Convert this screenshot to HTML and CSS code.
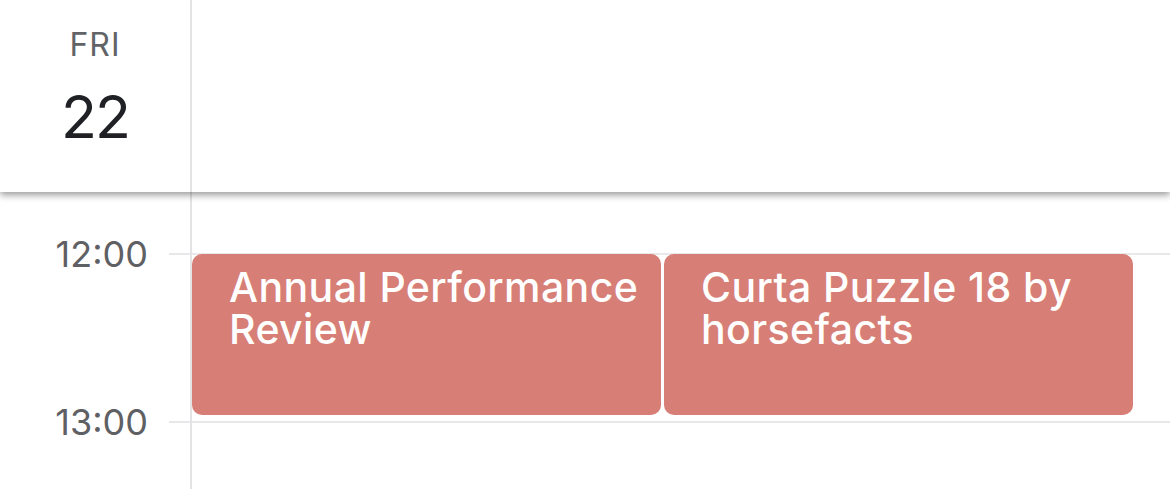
FILE: index.html
```html
<!DOCTYPE html>
<html lang="en">
<head>
    <meta charset="UTF-8">
    <meta name="viewport" content="width=device-width, initial-scale=1.0">
    <title>Day view</title>
    <link rel="stylesheet" href="styles.css">
</head>
<body>
    <div class="day-header">
        <div class="day-label">
            <div class="day-name">FRI</div>
            <div class="day-number">22</div>
        </div>
        <div class="day-allday"></div>
    </div>

    <div class="day-grid">
        <div class="gutter">
            <div class="time"><span>12:00</span></div>
            <div class="time"><span>13:00</span></div>
        </div>
        <div class="day-column">
            <div class="slot">
                <div class="events">
                    <div class="event">Annual Performance Review</div>
                    <div class="event">Curta Puzzle 18 by horsefacts</div>
                </div>
            </div>
            <div class="slot"></div>
        </div>
    </div>
</body>
</html>
```

FILE: styles.css
```css
body {
    margin: 0;
    font-family: Inter, "Noto Sans", sans-serif;
    background: #fff;
    height: 489px;
    overflow: hidden;
}
.day-header {
    display: flex;
    height: 192px;
    position: relative;
    z-index: 1;
    background: #fff;
    box-shadow: 0 3px 7px rgba(0, 0, 0, 0.4);
}
.day-label {
    width: 190px;
    border-right: 2px solid #e3e3e5;
    display: flex;
    flex-direction: column;
    align-items: center;
    padding-top: 25px;
}
.day-name {
    font-size: 32px;
    letter-spacing: 1px;
    color: #616367;
    line-height: 40px;
}
.day-number {
    font-size: 59px;
    letter-spacing: -2px;
    color: #202124;
    line-height: 70px;
    margin-top: 17px;
}
.day-allday {
    flex: 1;
}
.day-grid {
    display: flex;
    padding-top: 61px;
    height: 236px;
    overflow: hidden;
}
.gutter {
    width: 190px;
    border-right: 2px solid #e3e3e5;
    margin-top: -61px;
    padding-top: 61px;
}
.time {
    height: 168px;
    display: flex;
    justify-content: flex-end;
}
.time::after {
    content: "";
    width: 21px;
    border-top: 2px solid #e8e8ea;
    margin-left: 21px;
}
.time span {
    font-size: 36px;
    color: #5f6064;
    line-height: 40px;
    height: 0;
    transform: translateY(-19px);
}
.day-column {
    flex: 1;
}
.slot {
    height: 168px;
    border-top: 2px solid #e8e8ea;
    box-sizing: border-box;
}
.events {
    display: flex;
    gap: 3px;
    padding: 0 37px 0 0;
    height: 161px;
    margin-top: -1px;
}
.event {
    flex: 1;
    background: #d77f76;
    color: #fff;
    border-radius: 10px;
    font-size: 41px;
    font-weight: 500;
    letter-spacing: 0.4px;
    line-height: 42px;
    padding: 12px 16px 0 37px;
}
```
